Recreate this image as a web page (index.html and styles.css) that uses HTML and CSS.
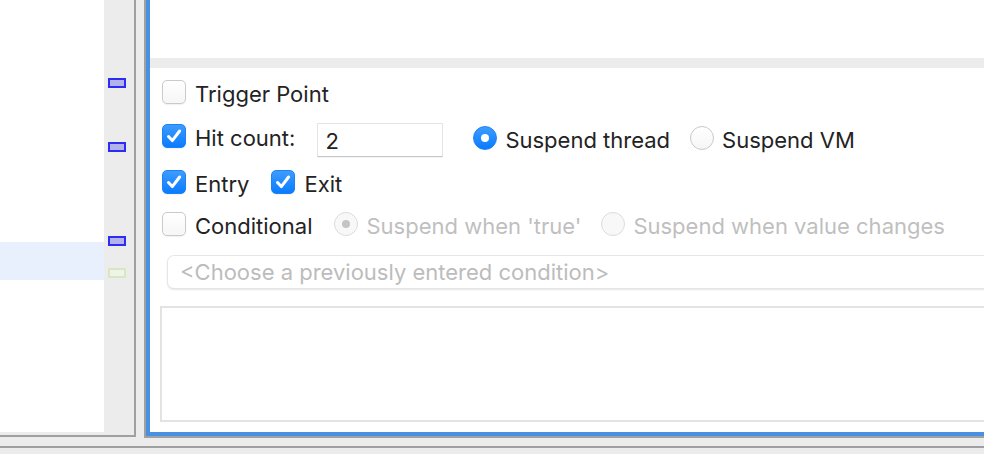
FILE: index.html
```html
<!DOCTYPE html>
<html>
<head>
<meta charset="utf-8">
<link rel="stylesheet" href="styles.css">
</head>
<body>
<div class="screen">
  <div class="main">
    <div class="left-pane">
      <div class="list"><div class="row-hl"></div></div>
      <div class="ruler">
        <span class="mark m1"></span>
        <span class="mark m2"></span>
        <span class="mark m3"></span>
        <span class="mark green m4"></span>
      </div>
    </div>
    <div class="right-pane">
      <div class="inner">
        <div class="top-area"></div>
        <div class="sash"></div>
        <div class="props">
          <div class="row row1">
            <label class="opt"><span class="cb"></span><span class="lbl">Trigger Point</span></label>
          </div>
          <div class="row row2">
            <label class="opt hit"><span class="cb on"><svg viewBox="0 0 24 24"><path d="M6.5 12.5 L10.3 16.6 L17.6 7" /></svg></span><span class="lbl">Hit count:</span></label>
            <div class="field">2</div>
            <label class="opt ropt r-thread"><span class="rb on"></span><span class="lbl">Suspend thread</span></label>
            <label class="opt ropt r-vm"><span class="rb"></span><span class="lbl">Suspend VM</span></label>
          </div>
          <div class="row row3">
            <label class="opt entry"><span class="cb on"><svg viewBox="0 0 24 24"><path d="M6.5 12.5 L10.3 16.6 L17.6 7" /></svg></span><span class="lbl">Entry</span></label>
            <label class="opt exit"><span class="cb on"><svg viewBox="0 0 24 24"><path d="M6.5 12.5 L10.3 16.6 L17.6 7" /></svg></span><span class="lbl">Exit</span></label>
          </div>
          <div class="row row4">
            <label class="opt cond"><span class="cb"></span><span class="lbl">Conditional</span></label>
            <label class="opt ropt disabled r-true"><span class="rb dis on"></span><span class="lbl">Suspend when 'true'</span></label>
            <label class="opt ropt disabled r-change"><span class="rb dis"></span><span class="lbl">Suspend when value changes</span></label>
          </div>
          <div class="combo">&lt;Choose a previously entered condition&gt;</div>
          <div class="textarea"></div>
        </div>
      </div>
    </div>
  </div>
  <div class="statusbar"></div>
</div>
</body>
</html>
```
FILE: styles.css
```css
html, body {
  margin: 0;
  padding: 0;
}
body {
  background: #ececec;
  width: 984px;
  height: 454px;
  overflow: hidden;
  font-family: "Inter", "Liberation Sans", sans-serif;
  font-size: 22px;
  color: #232323;
}
.screen {
  width: 984px;
  height: 454px;
  overflow: hidden;
}
.main {
  display: flex;
  align-items: flex-start;
  height: 438px;
}
.left-pane {
  flex: none;
  display: flex;
  width: 134px;
  height: 435px;
  border-right: 2px solid #a0a0a0;
  border-bottom: 2px solid #a0a0a0;
}
.list {
  width: 104px;
  height: 432px;
  background: #fff;
}
.row-hl {
  margin-top: 242px;
  height: 38px;
  background: #e7f0fc;
}
.ruler {
  width: 30px;
  display: flex;
  flex-direction: column;
}
.mark {
  display: block;
  box-sizing: border-box;
  width: 18px;
  height: 10px;
  margin-left: 4px;
  border: 2px solid #2c2cf2;
  background: #b2b2ee;
}
.m1 { margin-top: 78px; }
.m2 { margin-top: 54px; }
.m3 { margin-top: 84px; }
.m4 { margin-top: 22px; }
.mark.green {
  border-color: #d9e6c6;
  background: #eef4e6;
}
.right-pane {
  flex: none;
  margin-left: 8px;
  width: 1000px;
  height: 436px;
  border-left: 2px solid #a0a0a0;
  border-bottom: 2px solid #a0a0a0;
}
.inner {
  height: 432px;
  border-left: 4px solid #4a90e2;
  border-bottom: 4px solid #4a90e2;
  display: flex;
  flex-direction: column;
  background: #fff;
}
.top-area {
  height: 58px;
  background: #fff;
}
.sash {
  height: 10px;
  background: #ececec;
}
.props {
  flex: 1;
  padding-left: 12px;
  padding-top: 12px;
  background: #fff;
}
.row {
  display: flex;
  align-items: flex-start;
}
.opt {
  display: flex;
  align-items: flex-start;
  height: 24px;
  white-space: nowrap;
}
.lbl {
  margin-left: 9px;
  padding-top: 2px;
  line-height: 24px;
}
.ropt .lbl {
  margin-left: 8px;
}
.cb {
  flex: none;
  box-sizing: border-box;
  width: 24px;
  height: 24px;
  border-radius: 5px;
  border: 1px solid #cacaca;
  background: linear-gradient(#ffffff, #f6f6f6);
  box-shadow: 0 0.5px 1px rgba(0, 0, 0, 0.06);
  display: flex;
  align-items: center;
  justify-content: center;
}
.cb.on {
  border-color: #1c83f6;
  background: linear-gradient(#3d9cff, #0a7bff);
}
.cb svg {
  width: 24px;
  height: 24px;
  flex: none;
}
.cb svg path {
  fill: none;
  stroke: #fff;
  stroke-width: 3;
  stroke-linecap: round;
  stroke-linejoin: round;
}
.rb {
  flex: none;
  box-sizing: border-box;
  width: 24px;
  height: 24px;
  border-radius: 50%;
  border: 1px solid #c9c9c9;
  background: linear-gradient(#ffffff, #f6f6f6);
  display: flex;
  align-items: center;
  justify-content: center;
}
.rb.on {
  border-color: #1c83f6;
  background: linear-gradient(#3d9cff, #0a7bff);
}
.rb.on::after {
  content: "";
  width: 8px;
  height: 8px;
  border-radius: 50%;
  background: #fff;
}
.rb.dis {
  border-color: #dcdcdc;
  background: #f8f8f8;
}
.rb.dis.on::after {
  background: #c4c4c4;
}
.disabled .lbl {
  color: #bfbfbf;
}
.row2 {
  margin-top: 19px;
  height: 34px;
}
.row2 .hit {
  margin-top: 1px;
}
.field {
  box-sizing: border-box;
  margin-left: 22px;
  width: 126px;
  height: 34px;
  padding-left: 7px;
  padding-top: 1px;
  line-height: 33px;
  border: 1px solid #e4e4e4;
  border-bottom-color: #c6c6c6;
  box-shadow: 0 1px 0 rgba(0, 0, 0, 0.04);
  background: #fff;
}
.r-thread {
  margin-left: 30px;
  margin-top: 3px;
}
.r-vm {
  margin-left: 20px;
  margin-top: 3px;
}
.row3 {
  margin-top: 13px;
}
.exit {
  margin-left: 22px;
}
.row4 {
  margin-top: 18px;
}
.r-true {
  margin-left: 22px;
}
.r-change {
  margin-left: 20px;
}
.combo {
  box-sizing: border-box;
  margin-top: 19px;
  margin-left: 5px;
  width: 900px;
  height: 34px;
  padding-left: 12px;
  line-height: 32px;
  color: #bcbcbc;
  border: 1px solid #e6e6e6;
  border-radius: 7px;
  box-shadow: 0 1px 1.5px rgba(0, 0, 0, 0.1);
  background: #fff;
  white-space: nowrap;
}
.textarea {
  box-sizing: border-box;
  margin-top: 17px;
  margin-left: -2px;
  width: 900px;
  height: 116px;
  border: 2px solid #e3e3e3;
  background: #fff;
}
.statusbar {
  margin-top: 8px;
  height: 6px;
  border-top: 2px solid #a0a0a0;
}
```
